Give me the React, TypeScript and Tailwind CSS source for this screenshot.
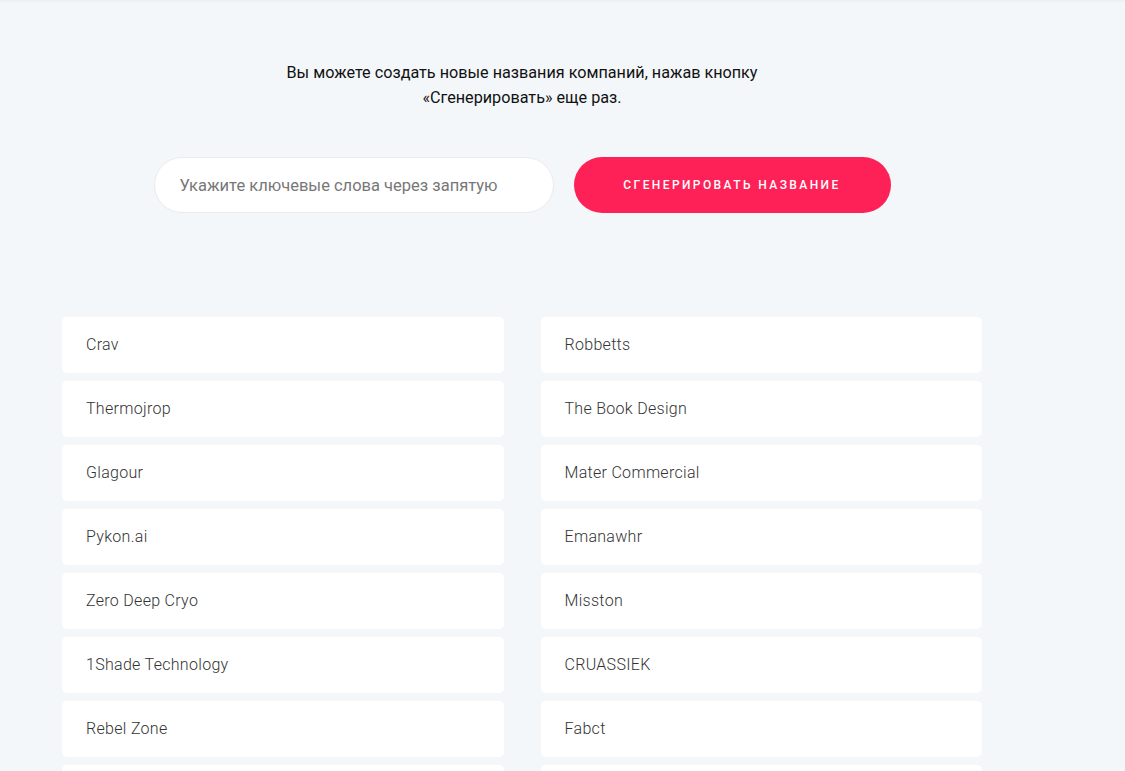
const leftNames = [
  "Crav",
  "Thermojrop",
  "Glagour",
  "Pykon.ai",
  "Zero Deep Cryo",
  "1Shade Technology",
  "Rebel Zone",
  "Netrix",
];

const rightNames = [
  "Robbetts",
  "The Book Design",
  "Mater Commercial",
  "Emanawhr",
  "Misston",
  "CRUASSIEK",
  "Fabct",
  "Vaxon",
];

function NameCard({ name }: { name: string }) {
  return (
    <div className="flex h-[56px] items-center rounded-[5px] bg-white px-6 text-[16px] font-light tracking-[0.3px] text-[#333]">
      {name}
    </div>
  );
}

export default function App() {
  return (
    <div
      className="min-h-screen overflow-hidden border-t-2 border-[#edf0f4] bg-[#f4f7fa]"
      style={{ fontFamily: "Roboto, 'Liberation Sans', sans-serif" }}
    >
      <div className="ml-[62px] w-[920px] pt-[58px]">
        <p className="text-center text-[16.2px] leading-[25px] text-[#111]">
          Вы можете создать новые названия компаний, нажав кнопку
          <br />
          «Сгенерировать» еще раз.
        </p>

        <div className="mt-[47px] flex justify-center gap-[20px]">
          <input
            type="text"
            placeholder="Укажите ключевые слова через запятую"
            className="h-[56px] w-[400px] rounded-full border border-[#e8ebef] bg-white px-[25px] text-[16.5px] text-[#333] outline-none placeholder:text-[#777]"
          />
          <button
            type="button"
            className="h-[56px] w-[317px] rounded-full bg-[#fe2157] text-[12px] font-medium uppercase tracking-[2.4px] text-white"
          >
            Сгенерировать название
          </button>
        </div>

        <div className="mt-[104px] grid grid-cols-2 gap-x-[37px]">
          <div className="flex flex-col gap-2">
            {leftNames.map((n) => (
              <NameCard key={n} name={n} />
            ))}
          </div>
          <div className="flex flex-col gap-2">
            {rightNames.map((n) => (
              <NameCard key={n} name={n} />
            ))}
          </div>
        </div>
      </div>
    </div>
  );
}
